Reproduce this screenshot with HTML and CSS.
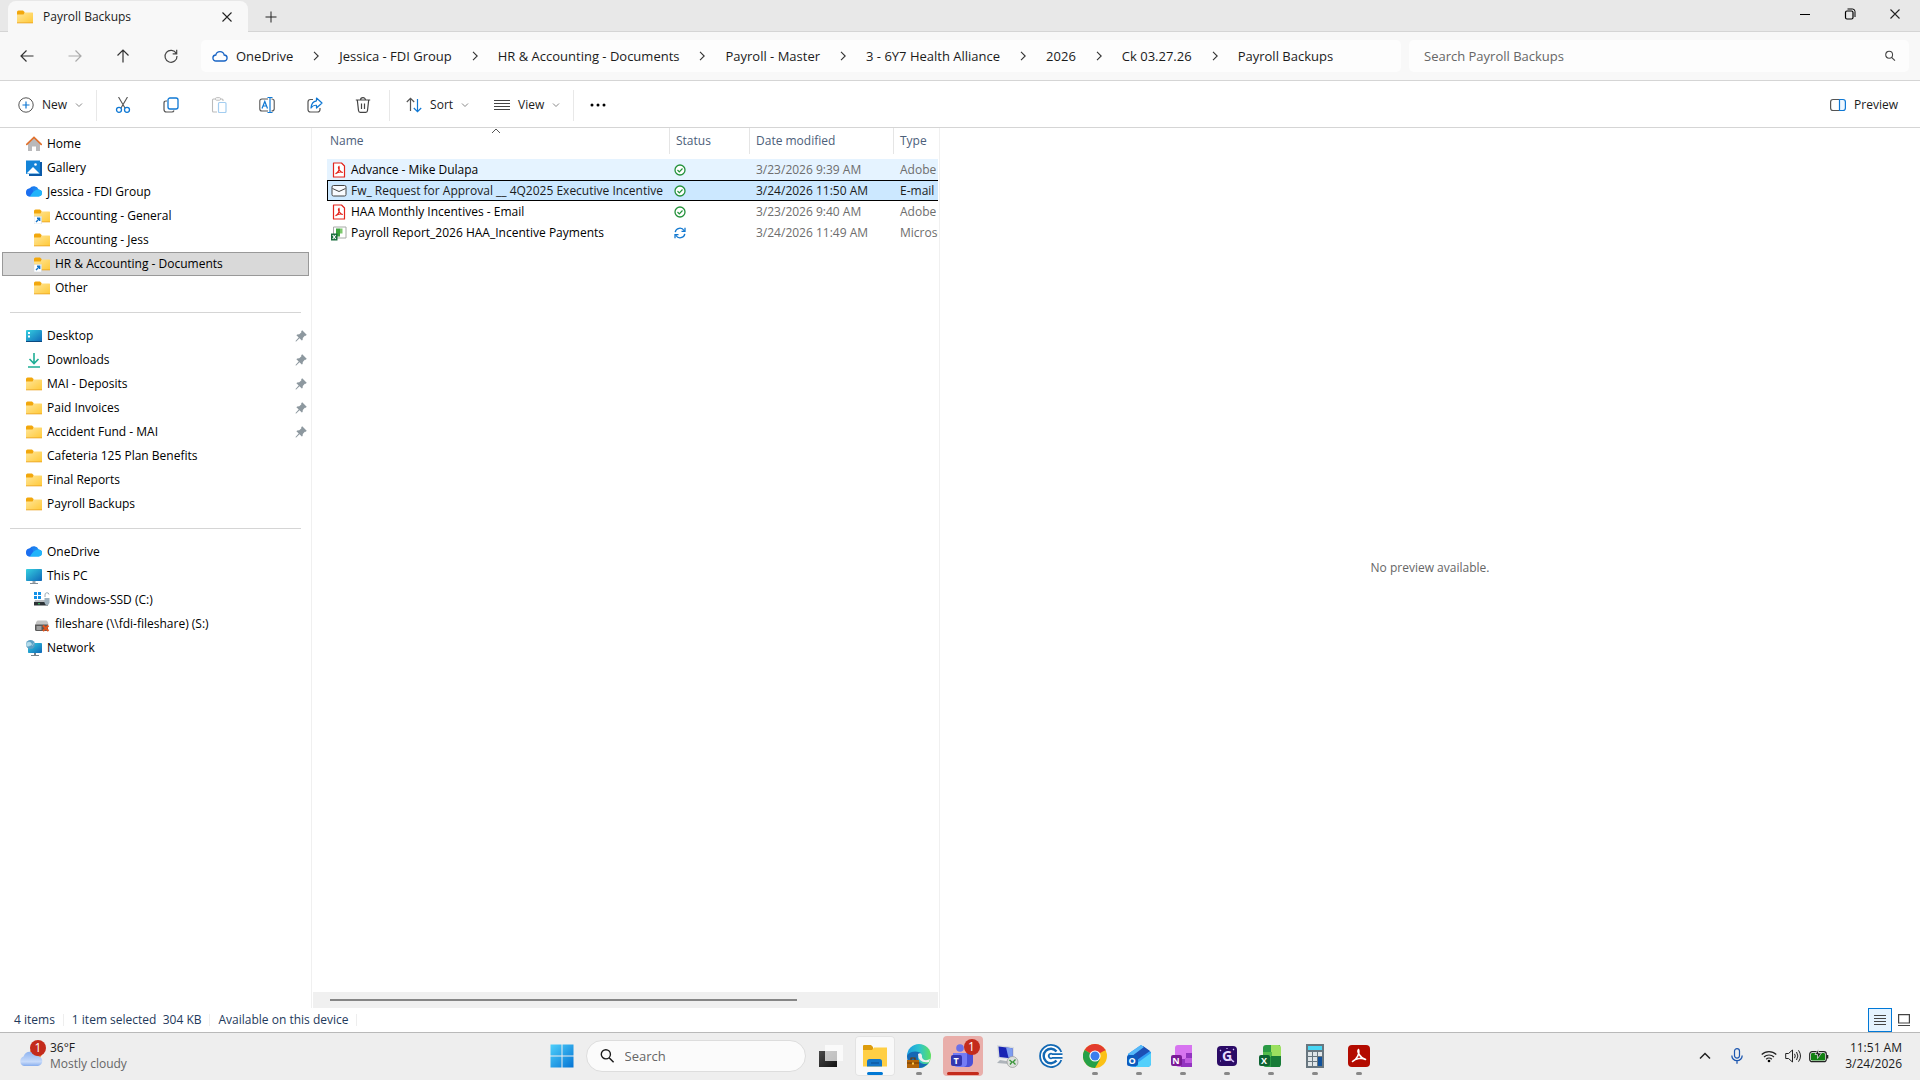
FILE: index.html
```html
<!DOCTYPE html>
<html lang="en">
<head>
    <meta charset="UTF-8">
    <meta name="viewport" content="width=device-width, initial-scale=1.0">
    <title>Payroll Backups</title>
    <link rel="stylesheet" href="styles.css">
</head>
<body>
    <!-- Shared icons -->
    <svg class="sprite" aria-hidden="true">
        <defs>
            <linearGradient id="g-folder" x1="0" y1="0" x2="1" y2="1"><stop offset="0" stop-color="#ffe69a"/><stop offset="1" stop-color="#ffc938"/></linearGradient>
            <linearGradient id="g-cloud" x1="0" y1="0" x2="1" y2="1"><stop offset="0" stop-color="#1565e8"/><stop offset="1" stop-color="#28b8ff"/></linearGradient>
            <linearGradient id="g-screen" x1="0" y1="0" x2="1" y2="1"><stop offset="0" stop-color="#35d0e0"/><stop offset="1" stop-color="#0f67b8"/></linearGradient>
            <linearGradient id="g-win" x1="0" y1="0" x2="1" y2="1"><stop offset="0" stop-color="#4fd0fb"/><stop offset="1" stop-color="#0574d4"/></linearGradient>
            <linearGradient id="g-edge" x1="0" y1="0" x2="1" y2="0"><stop offset="0" stop-color="#1a9be0"/><stop offset="0.5" stop-color="#2cc3cf"/><stop offset="1" stop-color="#5fe060"/></linearGradient>
            <linearGradient id="g-wx" x1="0" y1="0" x2="0" y2="1"><stop offset="0" stop-color="#8fb4f0"/><stop offset="0.7" stop-color="#c8dbfa"/><stop offset="1" stop-color="#86adee"/></linearGradient>
            <linearGradient id="g-dark" x1="0" y1="0" x2="1" y2="1"><stop offset="0" stop-color="#4a4a4a"/><stop offset="1" stop-color="#111"/></linearGradient>
        </defs>
        <symbol id="folder" viewBox="0 0 16 16">
            <path d="M0 3q0-1.5 1.500-1.500h4.500l1.600 1.500v3H0z" fill="#f2a70c"/>
            <path d="M0 5.500h6.500L8 3.500h7.500q.5 0 .5.500v10H0z" fill="url(#g-folder)"/>
            <path d="M0 13.500h16v.8H0z" fill="#e9a020"/>
        </symbol>
        <symbol id="folder-link" viewBox="0 0 16 16">
            <use href="#folder" width="16" height="16"/>
            <path d="M0 8.500h7.500V16H0z" fill="#fff" stroke="#c8d4e0" stroke-width=".5"/>
            <path d="M2 14l3.500-3.500M3 10.300h2.700V13" fill="none" stroke="#1272c8" stroke-width="1.400"/>
        </symbol>
        <symbol id="home" viewBox="0 0 16 16">
            <path d="M2 7.500L8 2l6 5.500V15h-4v-4.500H6V15H2z" fill="#b9b9bb"/>
            <path d="M.8 8.300L8 1.500l7.200 6.800" fill="none" stroke="#e0702c" stroke-width="1.700" stroke-linecap="round"/>
        </symbol>
        <symbol id="gallery" viewBox="0 0 16 16">
            <path d="M3 2h13v14H3z" fill="#0b5aa8"/>
            <path d="M0 .5h14v13.500H0z" fill="#1484d8"/>
            <path d="M.5 13.500L7 7l6.500 6.500z" fill="#fff"/><circle cx="9.500" cy="4.500" r="1.300" fill="#fff"/>
        </symbol>
        <symbol id="onedrive" viewBox="0 1 16 16">
            <path d="M4 13.500a4 4 0 0 1-.4-7.900A5.200 5.200 0 0 1 12.700 6.500 3.500 3.500 0 0 1 12.500 13.500z" fill="url(#g-cloud)"/>
            <path d="M4 13.500a4 4 0 0 1 0-8q2.800.2 3.500 3L4 13.500z" fill="#1b6ff0"/>
            <path d="M4 13.500q3.500-7 8.700-7a3.500 3.500 0 0 1-.2 7z" fill="#22b4fa"/>
        </symbol>
        <symbol id="desktop" viewBox="0 0 16 16">
            <rect y="2" width="16" height="12" rx="1" fill="url(#g-screen)"/>
            <path d="M2 4h2v2H2zM2 7.500h2v2H2z" fill="#fff"/><path d="M0 13h16v1H0z" fill="#0b4a80"/>
        </symbol>
        <symbol id="download" viewBox="0 0 16 16">
            <path d="M8 1v10M3.500 7L8 11.500 12.500 7M2 15h12" fill="none" stroke="#1fae95" stroke-width="1.600"/>
        </symbol>
        <symbol id="pc" viewBox="0 0 16 16">
            <rect y="1" width="16" height="12" rx=".8" fill="url(#g-screen)"/>
            <path d="M6.500 13h3v2h-3z" fill="#9aa5ad"/><path d="M4 15h8v.9H4z" fill="#75828c"/>
        </symbol>
        <symbol id="drive" viewBox="0 0 16 16">
            <path d="M0 0h3v3H0zM4 0h3v3H4zM0 4h3v3H0zM4 4h3v3H4z" fill="#1290e8"/>
            <path d="M1 8h11l3 3H0z" fill="#b8bcc0"/><path d="M0 10h14v3.500H0z" fill="#2c3236"/><path d="M4 11.300h2v1H4z" fill="#35d060"/>
            <path d="M10.500 6h5v4.500q0 2-2.500 3-2.500-1-2.500-3z" fill="#9fb2be"/><path d="M11 5V3a2 2 0 0 1 4-.5" fill="none" stroke="#9aabb6"/>
        </symbol>
        <symbol id="netdrive" viewBox="0 0 16 16">
            <path d="M4 4.500h8q2 0 2.500 4.500H1.500Q2 4.500 4 4.500z" fill="#c4c4c4"/><path d="M1 8.500h13v5q0 1.500-1.500 1.500h-10Q1 15 1 13.500z" fill="#5a5a5a"/><path d="M2.500 10.500h5v1h-5zM2.500 12.500h5v1h-5z" fill="#e4e4e4"/>
            <path d="M9 9.500l5.500 5.500M14.500 9.500L9 15" stroke="#e2541c" stroke-width="2"/>
        </symbol>
        <symbol id="network" viewBox="0 0 16 16">
            <rect x="2" y="3" width="14" height="10" rx=".8" fill="url(#g-screen)"/>
            <path d="M8 13h2v2H8zM5 15h8v1H5z" fill="#75828c"/>
            <circle cx="4.500" cy="4.500" r="4.500" fill="#5b9fc4"/><path d="M1 3q2-2 4 0T3 6 1 3M6 6l2-3" fill="#b4dbea" stroke="#b4dbea" stroke-width=".6"/>
        </symbol>
        <symbol id="pin" viewBox="0 0 12 12">
            <path d="M6.200 1.200l1-.9 4.500 4.500-.9 1-1-.1-2 2.200-.2 2-.8.7-2.300-2.300L1.200 11.500l-.6-.1.100-.6 3-3.200L1.400 5.200l.8-.8 2.100-.1 2.100-2z" fill="#8d989f"/>
        </symbol>
        <symbol id="pdf" viewBox="0 0 16 16">
            <path d="M2.500 1h8l3 3V15h-11z" fill="#fff" stroke="#e3241c" stroke-width="1.200" stroke-linejoin="round"/>
            <path d="M4.500 11.800c3-1.500 4.500-5 3.500-7.300-1.500 1 .8 5.500 3.800 6-2-.8-5.500 0-7.300 1.300z" fill="none" stroke="#e3241c" stroke-width="1.200"/>
        </symbol>
        <symbol id="mail" viewBox="0 0 16 16">
            <rect x="1" y="2.500" width="14" height="10.500" rx="1.500" fill="#f8fbff" stroke="#444"/><path d="M1.500 5.500L8 8.500l6.500-3" fill="none" stroke="#444"/>
        </symbol>
        <symbol id="sheet" viewBox="0 0 16 16">
            <path d="M2.500 2h12.500v11H2.500z" fill="#fff" stroke="#a6aaa6"/><path d="M5 3.500h4v8H5z" fill="#3ca23c"/><path d="M9 3.500h2.500v5H9z" fill="#7cc86c"/>
            <path d="M0 8.500h6.500V15.500H0z" fill="#176b3a"/><path d="M1.700 10l3 4M4.700 10l-3 4" stroke="#fff" stroke-width="1.200"/>
        </symbol>
        <symbol id="synced" viewBox="0 0 12 12">
            <circle cx="6" cy="6" r="5" fill="#fff" stroke="#23913a" stroke-width="1.300"/><path d="M3.500 6l1.800 1.800L8.500 4.500" fill="none" stroke="#23913a" stroke-width="1.200"/>
        </symbol>
        <symbol id="syncing" viewBox="0 0 12 12">
            <path d="M1.200 5.200A4.800 4.800 0 0 1 10 3.500M11 .8v3.500H7.500M10.800 6.800A4.800 4.800 0 0 1 2 8.500M1 11.200V7.700h3.500" fill="none" stroke="#1278d0" stroke-width="1.300"/>
        </symbol>
        <symbol id="chev-right" viewBox="0 0 10 10"><path d="M3 .8L7.200 5 3 9.200" fill="none" stroke="#333" stroke-width="1.100"/></symbol>
        <symbol id="chev-down" viewBox="0 0 8 8"><path d="M1 2.500L4 5.500 7 2.500" fill="none" stroke="#888"/></symbol>
        <symbol id="close" viewBox="0 0 12 12"><path d="M1.500 1.500l9 9M10.500 1.500l-9 9" stroke="#222" stroke-width="1.100"/></symbol>
        <symbol id="lens" viewBox="0 0 14 14"><circle cx="6" cy="5.500" r="4" fill="none" stroke="currentColor" stroke-width="1.200"/><path d="M8.800 8.500l4 4" stroke="currentColor" stroke-width="1.300"/></symbol>
    </svg>

    <header class="titlebar">
        <div class="tab">
            <svg class="icon"><use href="#folder"/></svg>
            <span class="tab-title">Payroll Backups</span>
            <button class="tab-close" aria-label="Close tab"><svg class="icon-sm"><use href="#close"/></svg></button>
        </div>
        <button class="tab-new" aria-label="New tab"><svg class="icon-sm" viewBox="0 0 12 12"><path d="M6 .5v11M.5 6h11" stroke="#222"/></svg></button>
        <div class="window-buttons">
            <button aria-label="Minimize"><svg class="icon-sm" viewBox="0 0 12 12"><path d="M1 6.500h10" stroke="#000"/></svg></button>
            <button aria-label="Restore"><svg class="icon-sm" viewBox="0 0 12 12"><rect x="1.500" y="3" width="7.500" height="8" rx="1.500" fill="none" stroke="#000" stroke-width="1.200"/><path d="M3.500 1h5q2.500 0 2.500 2.500V9" fill="none" stroke="#000"/></svg></button>
            <button aria-label="Close"><svg class="icon-sm"><use href="#close"/></svg></button>
        </div>
    </header>

    <div class="navbar">
        <div class="nav-buttons">
            <button aria-label="Back"><svg class="icon" viewBox="0 0 16 16"><path d="M14.500 8H2M7.500 2.500L2 8l5.500 5.500" fill="none" stroke="#333" stroke-width="1.200"/></svg></button>
            <button aria-label="Forward" disabled><svg class="icon" viewBox="0 0 16 16"><path d="M1.500 8H14M8.500 2.500L14 8l-5.500 5.500" fill="none" stroke="#aaa" stroke-width="1.200"/></svg></button>
            <button aria-label="Up"><svg class="icon" viewBox="0 0 16 16"><path d="M8 14.500V2M2.500 7.500L8 2l5.500 5.500" fill="none" stroke="#333" stroke-width="1.200"/></svg></button>
            <button aria-label="Refresh"><svg class="icon" viewBox="0 0 16 16"><path d="M13.300 5.500A6 6 0 1 0 14 8M13.700 1.800v4h-4" fill="none" stroke="#444" stroke-width="1.200"/></svg></button>
        </div>
        <nav class="address" aria-label="Address bar">
            <svg class="icon" viewBox="0 0 16 16"><path d="M4 13a3 3 0 0 1-.2-6A4.300 4.300 0 0 1 12.200 7 3 3 0 0 1 12 13z" fill="none" stroke="#1763c4" stroke-width="1.300"/></svg>
            <a href="#">OneDrive</a>
            <svg class="crumb-sep"><use href="#chev-right"/></svg>
            <a href="#">Jessica - FDI Group</a>
            <svg class="crumb-sep"><use href="#chev-right"/></svg>
            <a href="#">HR &amp; Accounting - Documents</a>
            <svg class="crumb-sep"><use href="#chev-right"/></svg>
            <a href="#">Payroll - Master</a>
            <svg class="crumb-sep"><use href="#chev-right"/></svg>
            <a href="#">3 - 6Y7 Health Alliance</a>
            <svg class="crumb-sep"><use href="#chev-right"/></svg>
            <a href="#">2026</a>
            <svg class="crumb-sep"><use href="#chev-right"/></svg>
            <a href="#">Ck 03.27.26</a>
            <svg class="crumb-sep"><use href="#chev-right"/></svg>
            <a href="#">Payroll Backups</a>
        </nav>
        <div class="search-box">
            <input type="text" placeholder="Search Payroll Backups" aria-label="Search Payroll Backups">
            <svg class="icon-sm"><use href="#lens"/></svg>
        </div>
    </div>

    <div class="toolbar">
        <button class="tool-label new"><svg class="icon" viewBox="0 0 16 16"><circle cx="8" cy="8" r="7.200" fill="none" stroke="#555"/><path d="M8 4.500v7M4.500 8h7" stroke="#0f78d4" stroke-width="1.200"/></svg>New<svg class="caret"><use href="#chev-down"/></svg></button>
        <span class="tool-sep"></span>
        <div class="tool-group">
            <button aria-label="Cut"><svg class="icon" viewBox="0 0 16 16"><path d="M3.500 0l6.500 11M12.500 0L6 11" stroke="#555" stroke-width="1.100"/><circle cx="4" cy="12.800" r="2.500" fill="none" stroke="#0f78d4" stroke-width="1.300"/><circle cx="12" cy="12.800" r="2.500" fill="none" stroke="#0f78d4" stroke-width="1.300"/></svg></button>
            <button aria-label="Copy"><svg class="icon" viewBox="0 0 16 16"><path d="M4 4H3Q1 4 1 6v6.500Q1 15 3.500 15H9q1.500 0 2-1.500" fill="none" stroke="#555" stroke-width="1.200"/><rect x="5" y="1" width="10" height="11" rx="2" fill="none" stroke="#0f78d4" stroke-width="1.300"/></svg></button>
            <button aria-label="Paste" disabled><svg class="icon" viewBox="0 0 16 16"><path d="M6 15H2.500Q1.500 15 1.500 14V3q0-1 1-1H11q1 0 1 1v1" fill="none" stroke="#bbb" stroke-width="1.100"/><rect x="4.500" y=".7" width="5" height="2.500" rx="1" fill="#fff" stroke="#bbb"/><rect x="7.500" y="5.500" width="7.500" height="10" rx="1" fill="none" stroke="#a3cdf0" stroke-width="1.200"/></svg></button>
            <button aria-label="Rename"><svg class="icon" viewBox="0 0 16 16"><path d="M9 2H3Q.8 2 .8 4v8q0 2 2.200 2h6M12.500 2q2.700 0 2.700 2v8q0 2-2.700 2" fill="none" stroke="#555" stroke-width="1.100"/><path d="M3 11.500L5.800 4.500l2.700 7M4 9h3.700M8.500.5h5M8.500 15.500h5M11 .5v15" fill="none" stroke="#0f78d4" stroke-width="1.200"/></svg></button>
            <button aria-label="Share"><svg class="icon" viewBox="0 0 16 16"><path d="M6 2.500H3.500Q1 2.500 1 5v7.500Q1 15 3.500 15h7q2.500 0 2.500-2.500V11" fill="none" stroke="#555" stroke-width="1.200"/><path d="M9.500 1L15 6l-5.500 5V8.300Q6 8 4 11q.5-6.500 5.500-7.200z" fill="none" stroke="#0f78d4" stroke-width="1.200" stroke-linejoin="round"/></svg></button>
            <button aria-label="Delete"><svg class="icon" viewBox="0 0 16 16"><path d="M.8 3h14.400M2.300 3l1.200 10.500Q3.700 15.300 5.200 15.300h5.600q1.500 0 1.700-1.800L13.700 3M5.500 3a2.500 2.300 0 0 1 5 0M6.500 6.500v5.500M9.500 6.500v5.500" fill="none" stroke="#444" stroke-width="1.200"/></svg></button>
        </div>
        <span class="tool-sep"></span>
        <button class="tool-label sort"><svg class="icon" viewBox="0 0 16 16"><path d="M4.500 14V1.500M.8 5L4.500 1.300 8.200 5" fill="none" stroke="#555" stroke-width="1.200"/><path d="M11.500 2v12.500M7.800 11l3.700 3.700L15.200 11" fill="none" stroke="#0f78d4" stroke-width="1.200"/></svg>Sort<svg class="caret"><use href="#chev-down"/></svg></button>
        <button class="tool-label view"><svg class="icon" viewBox="0 0 16 16"><path d="M0 3.500h16M0 6.500h16M0 9.500h16M0 12.500h16" stroke="#444"/></svg>View<svg class="caret"><use href="#chev-down"/></svg></button>
        <span class="tool-sep"></span>
        <button class="more" aria-label="See more"><svg class="icon" viewBox="0 0 16 16"><circle cx="2" cy="8" r="1.500"/><circle cx="8" cy="8" r="1.500"/><circle cx="14" cy="8" r="1.500"/></svg></button>
        <button class="tool-label preview-toggle"><svg class="icon" viewBox="0 0 16 16"><path d="M9.500 2.500H3Q.6 2.500.6 5v6q0 2.500 2.400 2.500h6.500" fill="none" stroke="#555" stroke-width="1.200"/><path d="M9.500 2.500H13q2.400 0 2.400 2.500v6q0 2.500-2.400 2.500H9.500z" fill="#eef7ff" stroke="#0f78d4" stroke-width="1.200"/></svg>Preview</button>
    </div>

    <main>
        <nav class="sidebar" aria-label="Folders">
            <ul>
                <li><a href="#"><svg class="icon"><use href="#home"/></svg>Home</a></li>
                <li><a href="#"><svg class="icon"><use href="#gallery"/></svg>Gallery</a></li>
                <li><a href="#"><svg class="icon"><use href="#onedrive"/></svg>Jessica - FDI Group</a></li>
                <li><a class="child" href="#"><svg class="icon"><use href="#folder-link"/></svg>Accounting - General</a></li>
                <li><a class="child" href="#"><svg class="icon"><use href="#folder"/></svg>Accounting - Jess</a></li>
                <li><a class="child current" href="#"><svg class="icon"><use href="#folder-link"/></svg>HR &amp; Accounting - Documents</a></li>
                <li><a class="child" href="#"><svg class="icon"><use href="#folder"/></svg>Other</a></li>
            </ul>
            <hr>
            <ul>
                <li><a href="#"><svg class="icon"><use href="#desktop"/></svg>Desktop<svg class="pin"><use href="#pin"/></svg></a></li>
                <li><a href="#"><svg class="icon"><use href="#download"/></svg>Downloads<svg class="pin"><use href="#pin"/></svg></a></li>
                <li><a href="#"><svg class="icon"><use href="#folder"/></svg>MAI - Deposits<svg class="pin"><use href="#pin"/></svg></a></li>
                <li><a href="#"><svg class="icon"><use href="#folder"/></svg>Paid Invoices<svg class="pin"><use href="#pin"/></svg></a></li>
                <li><a href="#"><svg class="icon"><use href="#folder"/></svg>Accident Fund - MAI<svg class="pin"><use href="#pin"/></svg></a></li>
                <li><a href="#"><svg class="icon"><use href="#folder"/></svg>Cafeteria 125 Plan Benefits</a></li>
                <li><a href="#"><svg class="icon"><use href="#folder"/></svg>Final Reports</a></li>
                <li><a href="#"><svg class="icon"><use href="#folder"/></svg>Payroll Backups</a></li>
            </ul>
            <hr>
            <ul>
                <li><a href="#"><svg class="icon"><use href="#onedrive"/></svg>OneDrive</a></li>
                <li><a href="#"><svg class="icon"><use href="#pc"/></svg>This PC</a></li>
                <li><a class="child" href="#"><svg class="icon"><use href="#drive"/></svg>Windows-SSD (C:)</a></li>
                <li><a class="child" href="#"><svg class="icon"><use href="#netdrive"/></svg>fileshare (\\fdi-fileshare) (S:)</a></li>
                <li><a href="#"><svg class="icon"><use href="#network"/></svg>Network</a></li>
            </ul>
        </nav>

        <section class="files">
            <div class="table-wrap">
                <svg class="sort-mark" viewBox="0 0 10 6"><path d="M1 5l4-4 4 4" fill="none" stroke="#555"/></svg>
                <table>
                    <colgroup><col class="col-name"><col class="col-status"><col class="col-date"><col class="col-type"></colgroup>
                    <thead>
                        <tr><th>Name</th><th>Status</th><th>Date modified</th><th>Type</th></tr>
                    </thead>
                    <tbody>
                        <tr class="hovered">
                            <td><span class="file"><svg class="icon"><use href="#pdf"/></svg>Advance - Mike Dulapa</span></td>
                            <td><svg class="state"><use href="#synced"/></svg></td>
                            <td>3/23/2026 9:39 AM</td>
                            <td>Adobe</td>
                        </tr>
                        <tr class="selected">
                            <td><span class="file"><svg class="icon"><use href="#mail"/></svg>Fw_ Request for Approval __ 4Q2025 Executive Incentive</span></td>
                            <td><svg class="state"><use href="#synced"/></svg></td>
                            <td>3/24/2026 11:50 AM</td>
                            <td>E-mail</td>
                        </tr>
                        <tr>
                            <td><span class="file"><svg class="icon"><use href="#pdf"/></svg>HAA Monthly Incentives - Email</span></td>
                            <td><svg class="state"><use href="#synced"/></svg></td>
                            <td>3/23/2026 9:40 AM</td>
                            <td>Adobe</td>
                        </tr>
                        <tr>
                            <td><span class="file"><svg class="icon"><use href="#sheet"/></svg>Payroll Report_2026 HAA_Incentive Payments</span></td>
                            <td><svg class="state"><use href="#syncing"/></svg></td>
                            <td>3/24/2026 11:49 AM</td>
                            <td>Microsoft</td>
                        </tr>
                    </tbody>
                </table>
            </div>
            <div class="scrollbar"><div class="thumb"></div></div>
        </section>

        <section class="preview">
            <p>No preview available.</p>
        </section>
    </main>

    <div class="statusbar">
        <span class="status-item">4 items</span>
        <span class="status-item">1 item selected&nbsp; 304 KB</span>
        <span class="status-item">Available on this device</span>
        <div class="view-modes">
            <button class="active" aria-label="Details view"><svg class="icon-sm" viewBox="0 0 12 12"><path d="M0 1.500h12M0 4.500h12M0 7.500h12M0 10.500h12" stroke="#444"/></svg></button>
            <button aria-label="Large icons view"><svg class="icon-sm" viewBox="0 0 12 12"><path d="M.6.600h10.800v8.400H.6zM0 11.500h12" fill="none" stroke="#444" stroke-width="1.200"/></svg></button>
        </div>
    </div>

    <footer class="taskbar">
        <button class="weather">
            <span class="weather-icon">
                <svg viewBox="0 0 24 24"><circle cx="17" cy="9" r="6" fill="#f08020"/><path d="M5 22a5 5 0 0 1-.5-9.500A7 7 0 0 1 17.500 12 5 5 0 0 1 19 22z" fill="url(#g-wx)"/></svg>
                <span class="badge">1</span>
            </span>
            <span class="weather-text"><span>36°F</span><span class="muted">Mostly cloudy</span></span>
        </button>

        <div class="apps">
            <button class="start" aria-label="Start"><svg class="app-icon" viewBox="0 0 24 24"><path d="M.5.500h11v11H.5zM12.500.500h11v11h-11zM.5 12.500h11v11H.5zM12.500 12.500h11v11h-11z" fill="url(#g-win)"/></svg></button>
            <label class="task-search">
                <svg class="icon"><use href="#lens"/></svg>
                <input type="text" placeholder="Search" aria-label="Search">
            </label>
            <button class="app" aria-label="Task view"><svg class="app-icon" viewBox="0 0 24 24"><path d="M0 7h18v16H0z" fill="url(#g-dark)"/><path d="M6 1h18v16H6z" fill="#fff" fill-opacity=".72"/></svg></button>
            <button class="app open focused" aria-label="File Explorer"><svg class="app-icon" viewBox="0 0 24 24"><path d="M0 2q0-1 1-1h7l2 2v4H0z" fill="#dd9c0c"/><path d="M0 6h9l2-2.500h13V22.500H0z" fill="#ffcf45"/><path d="M4 22.500V17.500Q4 15 6.500 15h10q2.500 0 2.500 2.500v5z" fill="#1376c8"/><path d="M8 19h8" stroke="#0a4c90"/></svg></button>
            <button class="app open" aria-label="Edge"><svg class="app-icon" viewBox="0 0 24 24"><circle cx="12" cy="12" r="12" fill="url(#g-edge)"/><path d="M0 12a9 7 0 0 1 14-3q-3 1-3 5 0 5 6 6 3 .4 5-1.500A12 12 0 0 1 0 12z" fill="#1668b4"/><path d="M11 10q3-2 4 1.500-.5 3 2.500 4.500 3 .5 5.500-1l-1 3q-6 1-9-2-2-2-2-6z" fill="#eee"/><path d="M0 16h12v8H0z" fill="#b36408"/><path d="M4 16v-2h4v2M0 19h12" fill="none" stroke="#6e3a00" stroke-width="1.200"/><path d="M5 18.500h2v2H5z" fill="#ffc94a"/></svg></button>
            <button class="app open alert" aria-label="Teams"><svg class="app-icon" viewBox="0 0 24 24"><circle cx="9" cy="4" r="3.800" fill="#6a70e8"/><path d="M14 9h8v9q0 4-4 5h-5z" fill="#4a50d8"/><path d="M2 9h14v10q0 4-4 4H7q-5 0-5-5z" fill="#747cf5"/><rect y="11" width="11" height="11" rx="2" fill="#3437b0"/><text class="glyph-sm" x="5" y="20">T</text></svg><span class="badge">1</span></button>
            <button class="app" aria-label="Remote Desktop"><svg class="app-icon" viewBox="0 0 24 24"><path d="M2 1l17 2v13L3 14z" fill="#d8dce0"/><path d="M3.500 2.500l14 1.700v10.300L4.500 13z" fill="#1824b4"/><path d="M11 3.500l6.500.7v10l-4-.5z" fill="#7d9df0"/><path d="M5 16l9 1.500v2.500L2 19z" fill="#aeb4ba"/><circle cx="17.500" cy="18" r="5.500" fill="#dce0dc" stroke="#999" stroke-width=".7"/><path d="M14.500 16l2.500 2-2 2.500M20.500 15.500L18 18l2.500 2.500" fill="none" stroke="#379436" stroke-width="1.300"/></svg></button>
            <button class="app" aria-label="CCH"><svg class="app-icon" viewBox="0 0 24 24"><circle cx="12" cy="12" r="11.500" fill="#fff"/><path d="M22.300 8a11 11 0 1 0 0 8" fill="none" stroke="#1369b4" stroke-width="1.800"/><path d="M17.500 7.500a7.200 7.200 0 1 0 0 9" fill="none" stroke="#1369b4" stroke-width="2.400"/><path d="M23.500 10.200H13.500a2.300 2.300 0 1 0 0 3.600h10" fill="none" stroke="#1369b4" stroke-width="1.700"/></svg></button>
            <button class="app open" aria-label="Chrome"><svg class="app-icon" viewBox="0 0 24 24"><circle cx="12" cy="12" r="12" fill="#fbc116"/><path d="M12 12L1.600 6A12 12 0 0 1 22.400 6z" fill="#e33b2e"/><path d="M12 12L1.600 6A12 12 0 0 0 12 24l5.200-9z" fill="#26a148"/><path d="M12 6.500h10.700a12 12 0 0 0-.9-1.500H10z" fill="#e33b2e"/><circle cx="12" cy="12" r="5.600" fill="#fff"/><circle cx="12" cy="12" r="4.500" fill="#3b7ded"/></svg></button>
            <button class="app open" aria-label="Outlook"><svg class="app-icon" viewBox="0 0 24 24"><path d="M1 10L14 1l10 7v11q0 4-4 4H6q-5 0-5-4z" fill="#2e9df4"/><path d="M5 12L16 2l7 5-13 9z" fill="#1c4fb4"/><path d="M9 20L24 9v10q0 4-4 4H9z" fill="#53d0fb"/><path d="M1 10L14 1l3 2L5 12z" fill="#56b8f8"/><rect y="11" width="11" height="11" rx="2" fill="#0c5bbd"/><text class="glyph-sm" x="5" y="20">O</text></svg></button>
            <button class="app open" aria-label="OneNote"><svg class="app-icon" viewBox="0 0 24 24"><path d="M4 4q0-3 3-3h14v22H9q-5 0-5-4z" fill="#d774f0"/><path d="M15 9h6v14H10V15h5z" fill="#9334c0"/><path d="M14 14h7v5h-7z" fill="#c05be0"/><rect y="11" width="11" height="11" rx="2" fill="#7a1b96"/><text class="glyph-sm" x="5" y="20">N</text></svg></button>
            <button class="app open" aria-label="G app"><svg class="app-icon" viewBox="0 0 24 24"><rect x="2" y="2" width="20" height="20" rx="4" fill="#2b0b66"/><text class="glyph-lg" x="12" y="17">G</text><path d="M5 6l1 1M18 5l1 1M19 17l-1 1M5 17h1M12 4v1M15 14l3 3.500" stroke="#d9c4ff" stroke-width="1.200"/></svg></button>
            <button class="app open" aria-label="Excel"><svg class="app-icon" viewBox="0 0 24 24"><path d="M4 4q0-3 3-3h14v22H7q-3 0-3-3z" fill="#2a9a45"/><path d="M12 1h7q3 0 3 3v8H12z" fill="#9be05f"/><path d="M4 8h9v5H4z" fill="#52bb4c"/><path d="M12 12h10v8q0 3-3 3h-7z" fill="#187c38"/><rect y="11" width="11" height="11" rx="2" fill="#0e6332"/><text class="glyph-sm" x="5" y="20">X</text></svg></button>
            <button class="app open" aria-label="Calculator"><svg class="app-icon" viewBox="0 0 24 24"><path d="M3 0h18v24H3z" fill="#68767f"/><path d="M5 2h14v4H5z" fill="#48d7f5"/><path d="M5 8h4v4H5zM10 8h4v4h-4zM15 8h4v4h-4zM5 13h4v4H5zM10 13h4v4h-4zM5 18h4v4H5zM10 18h4v4h-4z" fill="#dfe5e8"/><path d="M15 13h4v9h-4z" fill="#11529c"/></svg></button>
            <button class="app open" aria-label="Adobe Acrobat"><svg class="app-icon" viewBox="0 0 24 24"><rect x="1" y="1" width="22" height="22" rx="4" fill="#b30b00"/><path d="M5.500 17.500C9.500 16 13 9.500 11.500 5.500 9.500 7.500 14 15 18.500 15.500 15.500 13.300 8 14.500 5.500 17.500z" fill="none" stroke="#fff" stroke-width="1.600" stroke-linejoin="round"/></svg></button>
        </div>

        <div class="tray">
            <button class="tray-more" aria-label="Show hidden icons"><svg class="icon" viewBox="0 0 16 16"><path d="M3 10.500l5-5 5 5" fill="none" stroke="#222" stroke-width="1.500"/></svg></button>
            <button class="mic" aria-label="Microphone"><svg class="icon" viewBox="0 0 16 16"><rect x="5.500" y=".6" width="5" height="9.500" rx="2.500" fill="none" stroke="#1d57b0" stroke-width="1.200"/><path d="M2.800 7.500a5.200 5.200 0 0 0 10.400 0M8 12.700v3" fill="none" stroke="#1d57b0" stroke-width="1.300"/></svg></button>
            <button class="quick" aria-label="Network, volume and battery">
                <svg class="icon" viewBox="0 0 16 16"><path d="M.7 6.500a10.500 10.500 0 0 1 14.600 0M3 9a7.200 7.200 0 0 1 10 0M5.200 11.300a4 4 0 0 1 5.600 0" fill="none" stroke="#222" stroke-width="1.200"/><circle cx="8" cy="13" r="1.300"/></svg>
                <svg class="icon" viewBox="0 0 16 16"><path d="M.7 5.500h2.800L7.500 2v12L3.500 10.500H.7z" fill="none" stroke="#222"/><path d="M9.500 5.800q1.500 2.200 0 4.400M11.500 4q2.800 4 0 8M13.500 2.300q4 5.700 0 11.400" fill="none" stroke="#222"/></svg>
                <svg class="battery" viewBox="0 0 20 14"><rect x=".7" y="2.700" width="16.600" height="10" rx="2.500" fill="#fff" stroke="#222" stroke-width="1.200"/><rect x="2" y="4" width="14" height="7.400" rx="1.200" fill="#128012"/><path d="M18.500 6v3.500" stroke="#222" stroke-width="1.600"/><path d="M9.500 0L6 5.500h2.500v4l4-5.500h-3z" fill="#222" stroke="#eee" stroke-width=".7"/></svg>
            </button>
            <button class="clock"><span>11:51 AM</span><span>3/24/2026</span></button>
        </div>
    </footer>
</body>
</html>
```

FILE: styles.css
```css
/* Global styles */
* {
    box-sizing: border-box;
}

body {
    display: flex;
    flex-direction: column;
    height: 100vh;
    margin: 0;
    overflow: hidden;
    font-family: "Open Sans", "Noto Sans", sans-serif;
    font-size: 12px;
    line-height: 16px;
    color: #1b1b1b;
    background: #fff;
}

button {
    display: flex;
    align-items: center;
    justify-content: center;
    padding: 0;
    border: 0;
    background: none;
    font: inherit;
    color: inherit;
}

a {
    color: inherit;
    text-decoration: none;
}

input {
    flex: 1;
    min-width: 0;
    padding: 0;
    border: 0;
    outline: 0;
    background: none;
    font: inherit;
    color: inherit;
}

input::placeholder {
    color: #666;
    opacity: 1;
}

svg {
    flex: none;
    display: block;
}

.sprite {
    position: absolute;
    width: 0;
    height: 0;
}

.icon {
    width: 16px;
    height: 16px;
}

.icon-sm {
    width: 12px;
    height: 12px;
}

/* Title bar */
.titlebar {
    display: flex;
    align-items: flex-end;
    flex: none;
    height: 32px;
    padding: 0 3px 0 8px;
    background: #e8e8e8;
    box-shadow: inset 0 -1px #d5d5d5;
}

.tab {
    display: flex;
    align-items: center;
    width: 240px;
    height: 31px;
    padding: 0 9px;
    gap: 10px;
    border-radius: 8px 8px 0 0;
    background: #f8f8f8;
}

.tab-title {
    flex: 1;
}

.tab-close {
    width: 24px;
    height: 24px;
}

.tab-new {
    width: 46px;
    height: 31px;
}

.window-buttons {
    display: flex;
    align-self: flex-start;
    margin-left: auto;
}

.window-buttons button {
    width: 45px;
    height: 28px;
}

/* Navigation and address bar */
.navbar {
    display: flex;
    align-items: center;
    flex: none;
    gap: 8px;
    height: 49px;
    padding-right: 11px;
    border-bottom: 1px solid #d5d5d5;
    background: #f8f8f8;
    font-size: 13px;
}

.nav-buttons {
    display: flex;
    padding-left: 3px;
    margin-right: -2px;
}

.nav-buttons button {
    width: 48px;
    height: 32px;
}

.address {
    display: flex;
    align-items: center;
    flex: 1;
    height: 32px;
    padding-left: 11px;
    border-radius: 5px;
    background: #fdfdfd;
    white-space: nowrap;
}

.address .icon {
    margin-right: 8px;
}

.crumb-sep {
    width: 10px;
    height: 10px;
    margin: 0 18px;
}

.search-box {
    display: flex;
    align-items: center;
    flex: 0 1 500px;
    height: 32px;
    padding: 0 13px 0 15px;
    border-radius: 5px;
    background: #fdfdfd;
    color: #444;
}

/* Command bar */
.toolbar {
    display: flex;
    align-items: center;
    flex: none;
    height: 47px;
    padding: 2px 22px 0 18px;
    border-bottom: 1px solid #d5d5d5;
}

.tool-label {
    gap: 8px;
}

.new,
.view {
    margin-right: 13px;
}

.sort {
    margin: 0 25px 0 16px;
}

.caret {
    width: 8px;
    height: 8px;
}

.tool-sep {
    width: 1px;
    height: 31px;
    background: #e8e8e8;
}

.tool-group {
    display: flex;
    padding: 0 2px;
}

.tool-group button {
    width: 48px;
    height: 32px;
}

.more {
    width: 48px;
    height: 32px;
}

.preview-toggle {
    margin-left: auto;
}

/* Main panes */
main {
    display: flex;
    flex: 1;
    min-height: 0;
}

.sidebar {
    width: 312px;
    padding-top: 4px;
    border-right: 1px solid #f0f0f0;
    color: #000;
}

.sidebar ul {
    margin: 0;
    padding: 0 2px;
    list-style: none;
}

.sidebar a {
    display: flex;
    align-items: center;
    gap: 5px;
    height: 24px;
    padding-left: 24px;
    padding-right: 2px;
    white-space: nowrap;
}

.sidebar a.child {
    padding-left: 32px;
}

.sidebar a.current {
    background: #d9d9d9;
    box-shadow: inset 0 0 0 1px #999;
}

.sidebar hr {
    height: 1px;
    margin: 12px 10px 11px;
    border: 0;
    background: #d5d5d5;
}

.pin {
    width: 12px;
    height: 12px;
    margin-left: auto;
}

.files {
    display: flex;
    flex-direction: column;
    width: 628px;
    border-right: 1px solid #f0f0f0;
}

.table-wrap {
    position: relative;
    flex: 1;
    margin: 0 1px 0 15px;
    overflow: hidden;
}

.sort-mark {
    position: absolute;
    top: 0;
    left: 164px;
    width: 10px;
    height: 6px;
}

/* File table */
table {
    width: 100%;
    table-layout: fixed;
    border-collapse: separate;
    border-spacing: 0;
}

.col-name {
    width: 343px;
}

.col-status {
    width: 80px;
}

.col-date {
    width: 144px;
}

th {
    height: 26px;
    padding: 0 0 0 6px;
    border-right: 1px solid #e5e5e5;
    text-align: left;
    font-weight: normal;
    color: #4c607a;
}

th:first-child {
    padding-left: 3px;
}

th:last-child {
    border-right: 0;
}

/* Space between the header and the first file */
thead::after {
    content: "";
    display: block;
    height: 5px;
}

td {
    height: 21px;
    padding: 0 0 0 6px;
    overflow: hidden;
    white-space: nowrap;
    color: #6d6d6d;
}

td:first-child {
    padding-left: 4px;
    color: #000;
}

td:nth-child(2) {
    padding-left: 4px;
}

.file {
    display: flex;
    align-items: center;
    gap: 4px;
}

.state {
    width: 12px;
    height: 12px;
}

.hovered td {
    background: #e5f3ff;
}

.selected td {
    background: #cce8ff;
    border: solid #000;
    border-width: 1px 0;
    color: #1b1b1b;
}

.selected td:first-child {
    padding-left: 3px;
    border-left-width: 1px;
}

.scrollbar {
    display: flex;
    align-items: center;
    height: 16px;
    margin: 0 1px;
    padding: 0 17px;
    background: #f0f0f0;
}

.thumb {
    width: 79%;
    height: 2px;
    background: #868686;
}

.preview {
    display: flex;
    align-items: center;
    justify-content: center;
    flex: 1;
    color: #666;
}

.preview p {
    margin: 0;
}

/* Status bar */
.statusbar {
    display: flex;
    align-items: center;
    flex: none;
    height: 25px;
    padding: 0 4px 0 6px;
    border-bottom: 1px solid #b9b9b9;
    color: #1e395b;
}

.status-item {
    padding: 0 8px;
    border-right: 1px solid #eee;
    line-height: 12px;
}

.view-modes {
    display: flex;
    align-self: stretch;
    margin-left: auto;
}

.view-modes button {
    width: 24px;
}

.view-modes .active {
    border: 1px solid #0078d7;
    background: #e5f3ff;
}

/* Taskbar */
.taskbar {
    display: grid;
    grid-template-columns: 1fr auto 1fr;
    flex: none;
    height: 47px;
    padding-bottom: 1px;
    background: #eee;
}

.weather {
    justify-self: start;
    gap: 7px;
    padding-left: 19px;
}

.weather-icon {
    position: relative;
    width: 24px;
    height: 24px;
}

.weather-text,
.clock {
    display: flex;
    flex-direction: column;
    align-items: flex-start;
}

.muted {
    color: #666;
}

.badge {
    position: absolute;
    top: -4px;
    right: -3px;
    width: 16px;
    height: 16px;
    border-radius: 50%;
    background: #c42b1c;
    color: #fff;
    text-align: center;
}

.apps {
    display: flex;
    align-items: center;
    gap: 4px;
}

.app-icon {
    width: 24px;
    height: 24px;
}

.start {
    width: 40px;
}

.task-search {
    display: flex;
    align-items: center;
    gap: 10px;
    width: 220px;
    height: 32px;
    margin-right: 1px;
    padding: 0 12px;
    border: 1px solid #ddd;
    border-radius: 16px;
    background: #fbfbfb;
    font-size: 13px;
}

.app {
    position: relative;
    width: 40px;
    height: 40px;
    border-radius: 4px;
}

.app.open::after {
    content: "";
    position: absolute;
    bottom: 1px;
    left: 17px;
    width: 6px;
    height: 3px;
    border-radius: 2px;
    background: #888;
}

.app.focused {
    background: #f9f9f9;
    box-shadow: inset 0 0 0 1px #e3e3e3;
}

.app.focused::after {
    left: 12px;
    width: 16px;
    background: #0078d4;
}

.app.alert {
    background: #e9aeaa;
}

.app.alert::after {
    left: 4px;
    width: 32px;
    background: #c42b1c;
}

.app .badge {
    top: 3px;
    right: 3px;
}

.glyph-sm {
    fill: #fff;
    font-size: 9px;
    font-weight: bold;
    text-anchor: middle;
}

.glyph-lg {
    fill: #e8dcff;
    font-size: 14px;
    font-weight: bold;
    text-anchor: middle;
}

.tray {
    display: flex;
    align-items: center;
    justify-self: end;
    gap: 16px;
    padding-right: 18px;
}

.quick {
    gap: 8px;
}

.battery {
    width: 20px;
    height: 14px;
}

.clock {
    align-items: flex-end;
}
```
